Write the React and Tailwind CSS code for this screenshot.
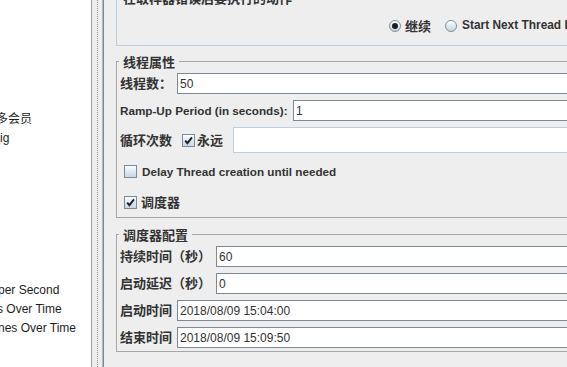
import React from "react";

function Check({ checked }) {
  return (
    <span className="inline-flex w-[13px] h-[13px] shrink-0 items-center justify-center border border-[#7a8a99] bg-[linear-gradient(to_bottom,#fbfcfe,#c6d5e5)]">
      {checked && (
        <svg width="9" height="9" viewBox="0 0 9 9">
          <path d="M1.2 4.6 L3.4 7.2 L8 1.4" stroke="#1f1f1f" strokeWidth="1.9" fill="none" />
        </svg>
      )}
    </span>
  );
}

function Radio({ checked }) {
  return (
    <span className="inline-flex w-[12px] h-[12px] shrink-0 items-center justify-center rounded-full border border-[#7f8d9c] bg-[linear-gradient(to_bottom,#ffffff,#c3d3e4)]">
      {checked && <span className="w-[6px] h-[6px] rounded-full bg-[#1e1e1e]" />}
    </span>
  );
}

function Field({ value }) {
  return (
    <div className="flex-1 h-full flex items-center border border-[#7a8a99] bg-white pl-[2px] text-[12px] font-normal text-[#333] leading-none">
      {value}
    </div>
  );
}

function TreeRow({ children }) {
  return <div className="h-[19px] flex items-center whitespace-nowrap">{children}</div>;
}

export default function App() {
  return (
    <div className="w-[567px] h-[367px] flex overflow-hidden bg-[#eeeeee] font-['Liberation_Sans','Noto_Sans_CJK_SC',sans-serif] text-[#333]">
      {/* left tree */}
      <div className="w-[91px] h-full shrink-0 overflow-hidden bg-white pt-[109px] text-[12px] text-[#1e1e1e] leading-none">
        <TreeRow><span className="ml-[-4px]">多会员</span></TreeRow>
        <TreeRow><span className="ml-[0px]">ig</span></TreeRow>
        <TreeRow />
        <TreeRow />
        <TreeRow />
        <TreeRow />
        <TreeRow />
        <TreeRow />
        <TreeRow />
        <TreeRow><span className="ml-[-2px]">per Second</span></TreeRow>
        <TreeRow><span className="ml-[-3px]">s Over Time</span></TreeRow>
        <TreeRow><span className="ml-[-2px]">nes Over Time</span></TreeRow>
      </div>
      {/* splitter */}
      <div className="w-[1px] h-full shrink-0 bg-[#9d9d9d]" />
      <div className="w-[10px] h-full shrink-0 flex pl-[5px]">
        <div className="w-0 h-full border-l border-dotted border-[#8f8f8f]" />
      </div>
      <div className="w-[1px] h-full shrink-0 bg-[#a9b5c1]" />
      <div className="w-[1px] h-full shrink-0 bg-[#7a8a99]" />

      {/* right panel */}
      <div className="flex-1 h-full overflow-hidden pl-[12px] font-bold">
        {/* on error box */}
        <div className="relative mt-[-2px] w-[600px] h-[48px] border border-[#b8cfe5] pt-[21px] pl-[272px]">
          <span className="absolute left-[2px] top-[-7px] px-[4px] bg-[#eeeeee] text-[13px] leading-[13px] whitespace-nowrap">
            在取样器错误后要执行的动作
          </span>
          <div className="flex h-[12px] items-center whitespace-nowrap">
            <Radio checked />
            <span className="ml-[4px] text-[13px] leading-none">继续</span>
            <span className="ml-[14px] flex items-center">
              <Radio />
            </span>
            <span className="ml-[5px] text-[11.9px] leading-none">Start Next Thread Loop</span>
            <span className="ml-[14px] flex items-center">
              <Radio />
            </span>
            <span className="ml-[5px] text-[13px] leading-none">停止线程</span>
          </div>
        </div>

        {/* thread properties */}
        <div className="relative mt-[15px] w-[600px] border border-[#a6a6a6] pl-[3px] pt-[11px] pb-[4px]">
          <span className="absolute left-[2px] top-[-6px] px-[4px] bg-[#eeeeee] text-[13px] leading-[13px] whitespace-nowrap">
            线程属性
          </span>
          <div className="flex h-[21px] items-center">
            <span className="w-[57px] shrink-0 text-[13px] leading-none">线程数：</span>
            <Field value="50" />
          </div>
          <div className="flex h-[21px] items-center mt-[6px]">
            <span className="w-[173px] shrink-0 text-[11.7px] leading-none whitespace-nowrap">Ramp-Up Period (in seconds):</span>
            <Field value="1" />
          </div>
          <div className="flex h-[26px] items-center mt-[6px]">
            <span className="w-[62px] shrink-0 text-[13px] leading-none">循环次数</span>
            <Check checked />
            <span className="ml-[2px] w-[36px] shrink-0 text-[13px] leading-none">永远</span>
            <div className="flex-1 h-full border border-[#b8cfe5] bg-white" />
          </div>
          <div className="flex h-[21px] items-center mt-[8px] pl-[4px]">
            <Check />
            <span className="ml-[5px] text-[11.7px] leading-none whitespace-nowrap">Delay Thread creation until needed</span>
          </div>
          <div className="flex h-[21px] items-center mt-[10px] pl-[4px]">
            <Check checked />
            <span className="ml-[4px] text-[13px] leading-none">调度器</span>
          </div>
        </div>

        {/* scheduler config */}
        <div className="relative mt-[16px] w-[600px] border border-[#a6a6a6] pl-[3px] pt-[11px] pb-[3px]">
          <span className="absolute left-[2px] top-[-6px] px-[4px] bg-[#eeeeee] text-[13px] leading-[13px] whitespace-nowrap">
            调度器配置
          </span>
          <div className="flex h-[21px] items-center">
            <span className="w-[96px] shrink-0 text-[13px] leading-none whitespace-nowrap">持续时间（秒）</span>
            <Field value="60" />
          </div>
          <div className="flex h-[21px] items-center mt-[6px]">
            <span className="w-[96px] shrink-0 text-[13px] leading-none whitespace-nowrap">启动延迟（秒）</span>
            <Field value="0" />
          </div>
          <div className="flex h-[21px] items-center mt-[6px]">
            <span className="w-[57px] shrink-0 text-[13px] leading-none">启动时间</span>
            <Field value="2018/08/09 15:04:00" />
          </div>
          <div className="flex h-[21px] items-center mt-[6px]">
            <span className="w-[57px] shrink-0 text-[13px] leading-none">结束时间</span>
            <Field value="2018/08/09 15:09:50" />
          </div>
        </div>
      </div>
    </div>
  );
}
